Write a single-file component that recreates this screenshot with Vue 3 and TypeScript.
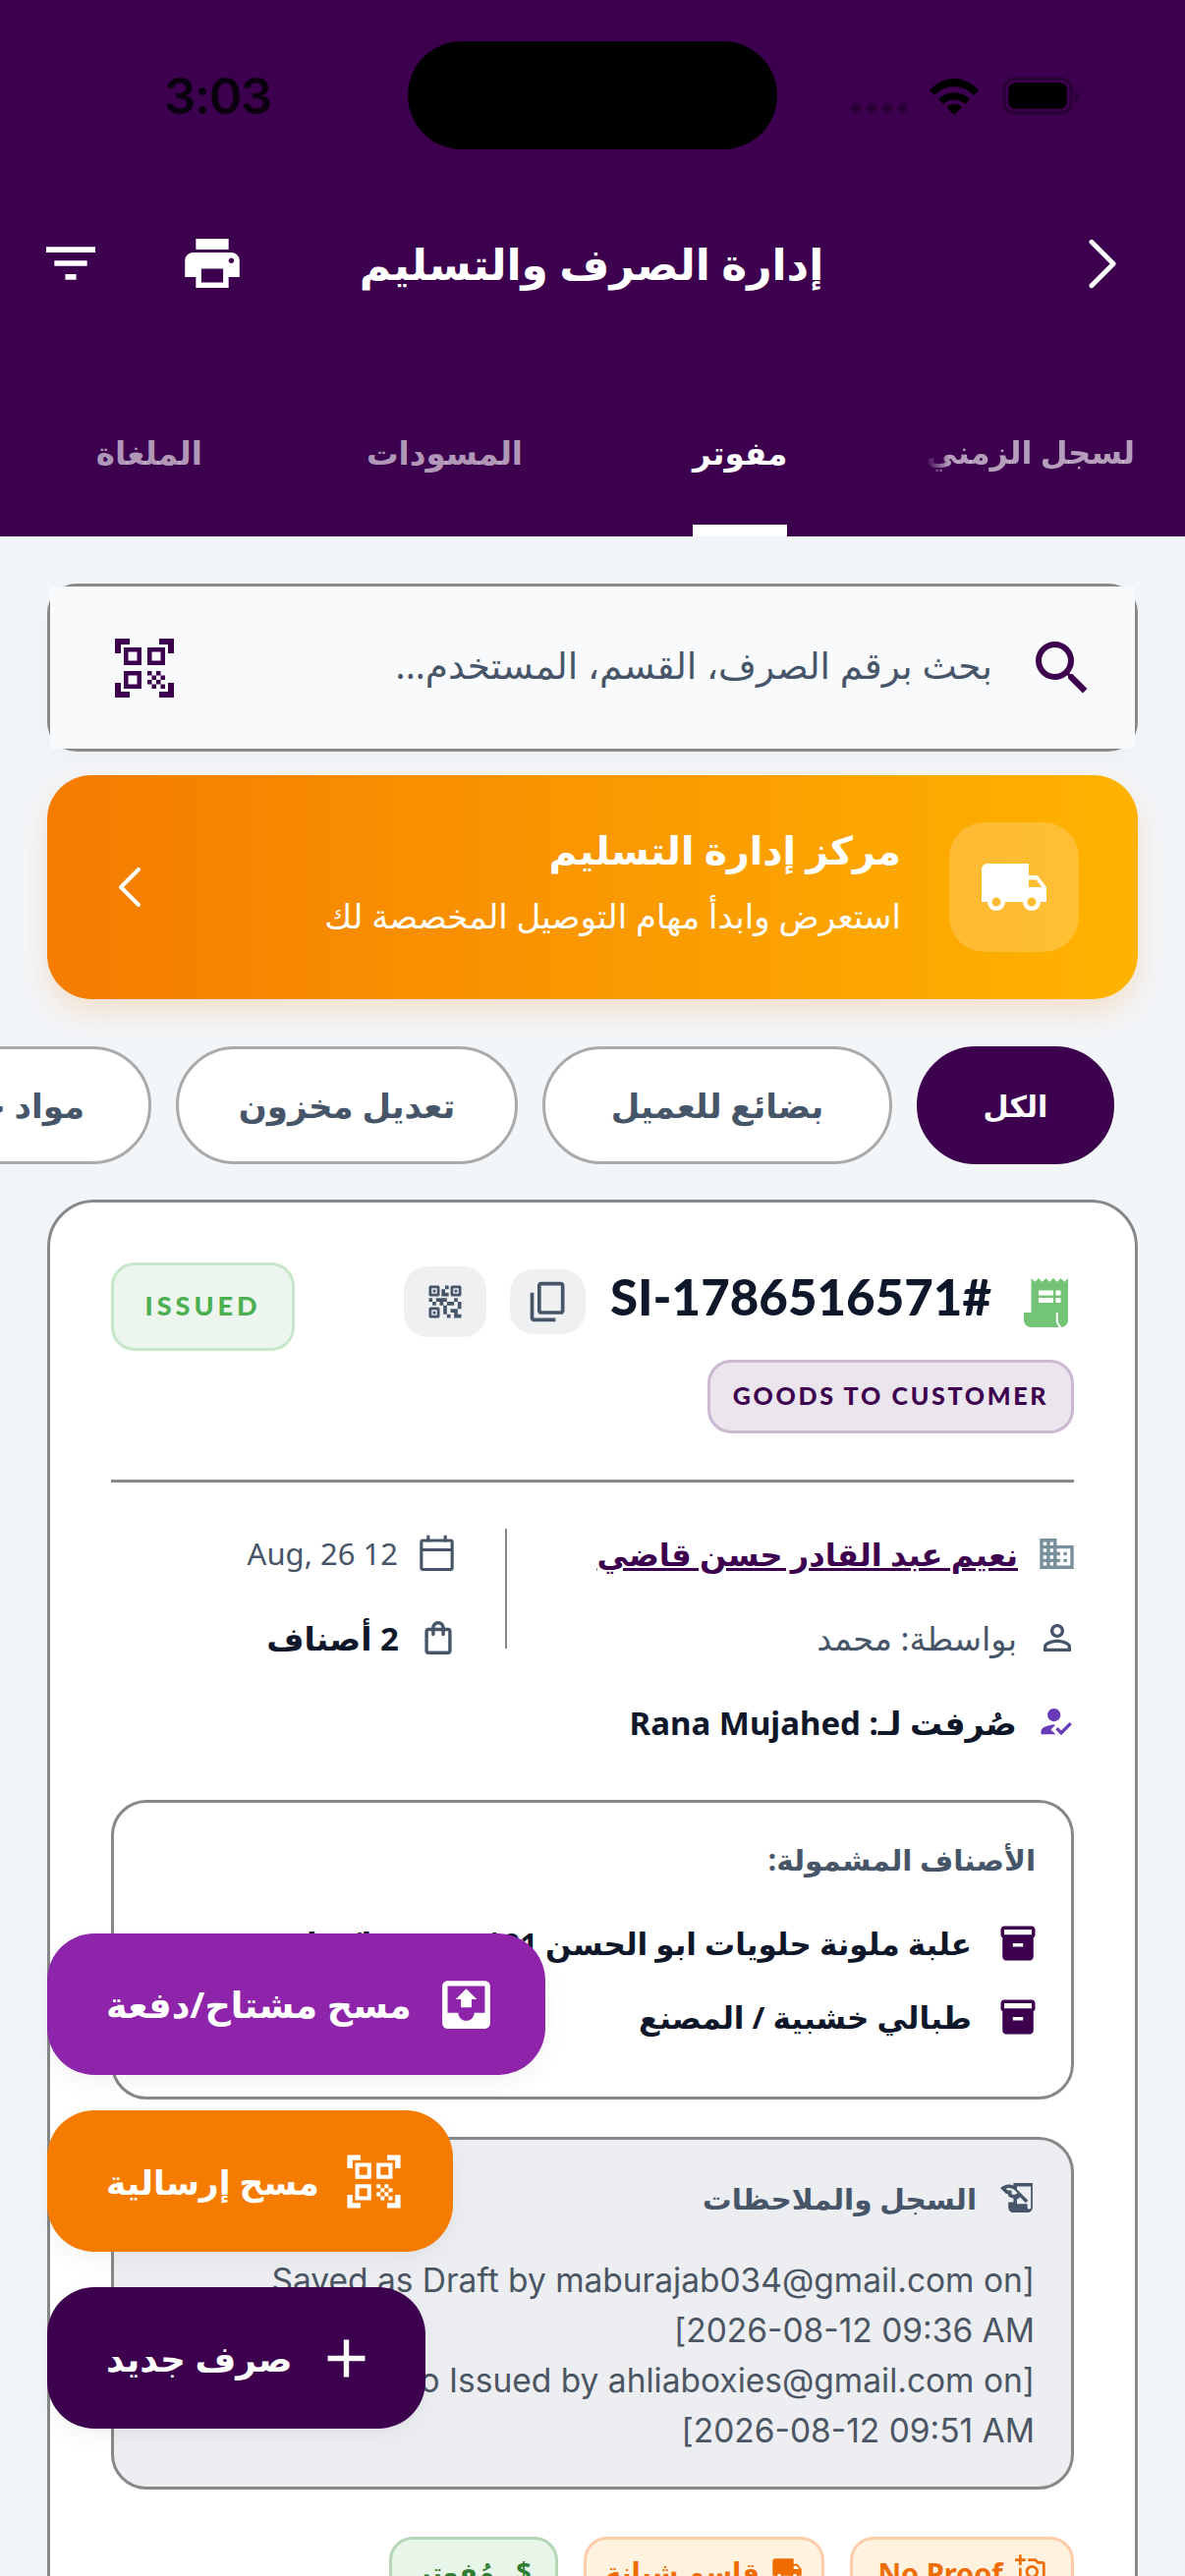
<script setup lang="ts">
const tabs = [
  { label: 'لسجل الزمني', cls: 'fade' },
  { label: 'مفوتر', cls: 'active' },
  { label: 'المسودات', cls: 'drafts' },
  { label: 'الملغاة', cls: 'void' },
]
const chips = [
  { label: 'الكل', cls: 'on' },
  { label: 'بضائع للعميل', cls: 'w2' },
  { label: 'تعديل مخزون', cls: 'w3' },
  { label: 'مواد خام', cls: '' },
]
const qrScan = 'M9.5 6.5v3h-3v-3h3M11 5H5v6h6V5zm-1.5 9.5v3h-3v-3h3M11 13H5v6h6v-6zm6.5-6.5v3h-3v-3h3M19 5h-6v6h6V5zm-6 8h1.5v1.5H13V13zm1.5 1.5H16V16h-1.5v-1.5zM16 13h1.5v1.5H16V13zm-3 3h1.5v1.5H13V16zm1.5 1.5H16V19h-1.5v-1.5zM16 16h1.5v1.5H16V16zm1.5-1.5H19V16h-1.5v-1.5zm0 3H19V19h-1.5v-1.5zM22 7h-2V4h-3V2h5v5zm0 15v-5h-2v3h-3v2h5zM2 22h5v-2H4v-3H2v5zM2 2v5h2V4h3V2H2z'
const box = 'M20 2H4c-1 0-2 .9-2 2v3.01c0 .72.43 1.34 1 1.69V20c0 1.1 1.1 2 2 2h14c.9 0 2-.9 2-2V8.7c.57-.35 1-.97 1-1.69V4c0-1.1-1-2-2-2zm-5 12H9v-2h6v2zm5-7H4V4l16-.02V7z'
const truck = 'M20 8h-3V4H3c-1.1 0-2 .9-2 2v11h2c0 1.66 1.34 3 3 3s3-1.34 3-3h6c0 1.66 1.34 3 3 3s3-1.34 3-3h2v-5l-3-4zM6 18.5c-.83 0-1.5-.67-1.5-1.5s.67-1.5 1.5-1.5 1.5.67 1.5 1.5-.67 1.5-1.5 1.5zm13.5-9l1.96 2.5H17V9.5h2.5zm-1.5 9c-.83 0-1.5-.67-1.5-1.5s.67-1.5 1.5-1.5 1.5.67 1.5 1.5-.67 1.5-1.5 1.5z'
</script>

<template>
  <div class="page">
    <header class="head">
      <div class="status">
        <span class="time">3:03</span>
        <div class="island"></div>
        <div class="sys">
          <svg class="dots" viewBox="0 0 58 12"><circle cx="6" cy="6" r="5"/><circle cx="22" cy="6" r="5"/><circle cx="38" cy="6" r="5"/><circle cx="54" cy="6" r="5"/></svg>
          <svg class="wifi" viewBox="0 0 50 38"><path d="M0 13C14-3 36-3 50 13l-5 5C33 6 17 6 5 18zM9 22c9-9 23-9 32 0l-5 5c-6-6-16-6-22 0zM17 30c4-4 12-4 16 0l-8 8z"/></svg>
          <svg class="batt" viewBox="0 0 80 40"><rect x="2" y="2" width="70" height="36" rx="11" fill="none" stroke="#2a0036" stroke-width="3.5"/><rect x="6.500" y="6.500" width="61" height="27" rx="7"/><path d="M76 14c3 1 4 3 4 6s-1 5-4 6z" fill="#2a0036"/></svg>
        </div>
      </div>
      <div class="bar">
        <div class="bar-r"><svg class="back" viewBox="0 0 30 52"><path d="M3 3l23 23L3 49" fill="none" stroke="#fff" stroke-width="5" stroke-linecap="round" stroke-linejoin="round"/></svg></div>
        <h1 class="title">إدارة الصرف والتسليم</h1>
        <div class="bar-l">
          <svg class="print" viewBox="2 3 20 18"><path d="M19 8H5c-1.660 0-3 1.340-3 3v6h4v4h12v-4h4v-6c0-1.660-1.340-3-3-3zm-3 11H8v-5h8v5zm3-7c-.55 0-1-.45-1-1s.45-1 1-1 1 .45 1 1-.45 1-1 1zm-1-9H6v4h12V3z" fill="#fff"/></svg>
          <svg class="filter" viewBox="3 6 18 12"><path d="M10 18h4v-2h-4v2zM3 6v2h18V6H3zm3 7h12v-2H6v2z" fill="#fff"/></svg>
        </div>
      </div>
      <nav class="tabs">
        <div v-for="t in tabs" :key="t.label" class="tab" :class="t.cls"><span>{{ t.label }}</span></div>
      </nav>
    </header>

    <div class="search">
      <div class="search-in">
        <svg class="s-ic" viewBox="3 3 18 18"><path d="M15.500 14h-.79l-.28-.27A6.471 6.471 0 0 0 16 9.500 6.500 6.500 0 1 0 9.500 16c1.610 0 3.090-.59 4.230-1.570l.27.28v.79l5 4.990L20.490 19l-4.990-5zm-6 0C7.010 14 5 11.990 5 9.500S7.010 5 9.500 5 14 7.010 14 9.500 11.990 14 9.500 14z" fill="#3d004f"/></svg>
        <span class="ph">بحث برقم الصرف، القسم، المستخدم...</span>
        <svg class="s-qr" viewBox="0 0 24 24"><path :d="qrScan" fill="#3d004f"/></svg>
      </div>
    </div>

    <section class="banner">
      <div class="ban-ic"><svg viewBox="0 0 24 24"><path :d="truck" fill="#fff"/></svg></div>
      <div class="ban-tx">
        <div class="ban-t">مركز إدارة التسليم</div>
        <div class="ban-s">استعرض وابدأ مهام التوصيل المخصصة لك</div>
      </div>
      <svg class="ban-ch" viewBox="0 0 24 40"><path d="M21 2L3 20l18 18" fill="none" stroke="#fff" stroke-width="4" stroke-linecap="round" stroke-linejoin="round"/></svg>
    </section>

    <div class="chips">
      <div v-for="c in chips" :key="c.label" class="chip" :class="c.cls">{{ c.label }}</div>
    </div>

    <article class="card">
      <div class="c-top">
        <svg class="rcpt" viewBox="3 2 18 20">
          <path d="M19.500 3.500L18 2l-1.500 1.500L15 2l-1.500 1.500L12 2l-1.500 1.500L9 2 7.500 3.500 6 2v14H3v3c0 1.660 1.340 3 3 3h12c1.660 0 3-1.340 3-3V2z" fill="#73c476"/>
          <path d="M9 7h6v2H9zM16 7h2v2h-2zM9 10h6v2H9zM16 10h2v2h-2z" fill="#fff"/>
          <path d="M16.500 16v3c0 1.200.5 2.200 1.500 3" fill="none" stroke="#fff" stroke-width=".8"/>
        </svg>
        <span class="sid">#SI-1786516571</span>
        <span class="ibtn copy"><svg viewBox="0 0 24 24"><g transform="matrix(1 0 0 -1 0 24)"><path d="M16 1H4c-1.100 0-2 .9-2 2v14h2V3h12V1zm3 4H8c-1.100 0-2 .9-2 2v14c0 1.100.9 2 2 2h11c1.100 0 2-.9 2-2V7c0-1.100-.9-2-2-2zm0 16H8V7h11v14z" fill="#475569"/></g></svg></span>
        <span class="ibtn qr"><svg viewBox="0 0 24 24"><path d="M15 21h-2v-2h2v2zM13 14h-2v5h2v-5zM21 12h-2v4h2v-4zM19 10h-2v2h2v-2zM7 12H5v2h2v-2zM5 10H3v2h2v-2zM12 5h2V3h-2v2zM4.500 4.500v3h3v-3h-3zM8 9H4c-.55 0-1-.45-1-1V4c0-.55.45-1 1-1h4c.55 0 1 .45 1 1v4c0 .55-.45 1-1 1zM4.500 16.500v3h3v-3h-3zM8 21H4c-.55 0-1-.45-1-1v-4c0-.55.45-1 1-1h4c.55 0 1 .45 1 1v4c0 .55-.45 1-1 1zM16.500 4.500v3h3v-3h-3zM20 9h-4c-.55 0-1-.45-1-1V4c0-.55.45-1 1-1h4c.55 0 1 .45 1 1v4c0 .55-.45 1-1 1zM19 19v-3h-4v2h2v3h4v-2h-2zM17 12h-4v2h4v-2zM13 10H7v2h2v2h2v-2h2v-2zM14 9V7h-2V5h-2v4h4zM6.750 5.250h-1.500v1.500h1.500v-1.500zM6.750 17.250h-1.500v1.500h1.500v-1.500zM18.750 5.250h-1.500v1.500h1.500v-1.500z" fill="#475569" fill-rule="evenodd"/></svg></span>
        <span class="issued">ISSUED</span>
      </div>
      <div class="goods-row"><span class="goods">GOODS TO CUSTOMER</span></div>
      <div class="hr"></div>

      <div class="meta">
        <div class="m-r">
          <div class="m-line">
            <svg viewBox="2 3 20 18" class="i-biz"><path d="M12 7V3H2v18h20V7H12zM6 19H4v-2h2v2zm0-4H4v-2h2v2zm0-4H4V9h2v2zm0-4H4V5h2v2zm4 12H8v-2h2v2zm0-4H8v-2h2v2zm0-4H8V9h2v2zm0-4H8V5h2v2zm10 12h-8v-2h2v-2h-2v-2h2v-2h-2V9h8v10zm-2-8h-2v2h2v-2zm0 4h-2v2h2v-2z" fill="#78909c"/></svg>
            <a class="name">نعيم عبد القادر حسن قاضي</a>
          </div>
          <div class="m-line m2">
            <svg viewBox="4 4 16 16" class="i-usr"><path d="M12 5.900c1.160 0 2.100.94 2.100 2.100s-.94 2.100-2.100 2.100S9.900 9.160 9.900 8s.94-2.100 2.100-2.100m0 9c2.970 0 6.100 1.460 6.100 2.100v1.100H5.900V17c0-.64 3.130-2.100 6.100-2.100M12 4C9.790 4 8 5.790 8 8s1.790 4 4 4 4-1.790 4-4-1.790-4-4-4zm0 9c-2.670 0-8 1.340-8 4v3h16v-3c0-2.660-5.330-4-8-4z" fill="#475569"/></svg>
            <span class="by wide">بواسطة: محمد</span>
          </div>
        </div>
        <div class="m-l">
          <div class="m-line">
            <svg viewBox="2 0 20 23" class="i-cal"><path d="M4 4h16a1 1 0 0 1 1 1v15a1 1 0 0 1-1 1H4a1 1 0 0 1-1-1V5a1 1 0 0 1 1-1zM3 9.500h18M7 1v4M17 1v4" fill="none" stroke="#475569" stroke-width="1.800"/></svg>
            <span class="by">12 Aug, 26</span>
          </div>
          <div class="m-line m2">
            <svg viewBox="4 2 16 20" class="i-bag"><path d="M18 6h-2c0-2.210-1.790-4-4-4S8 3.790 8 6H6c-1.100 0-2 .9-2 2v12c0 1.100.9 2 2 2h12c1.100 0 2-.9 2-2V8c0-1.100-.9-2-2-2zm-6-2c1.100 0 2 .9 2 2h-4c0-1.100.9-2 2-2zm6 16H6V8h2v2c0 .55.45 1 1 1s1-.45 1-1V8h4v2c0 .55.45 1 1 1s1-.45 1-1V8h2v12z" fill="#475569"/></svg>
            <span class="cnt">2 أصناف</span>
          </div>
        </div>
      </div>
      <div class="m-line m3">
        <svg viewBox="3 4 20 17" class="i-reg"><path d="M9 17l3-2.940c-.39-.04-.68-.06-1-.06-2.670 0-8 1.340-8 4v2h9l-3-3zm2-5c2.210 0 4-1.790 4-4s-1.790-4-4-4-4 1.790-4 4 1.790 4 4 4M15.470 20.500L12 17l1.400-1.410 2.070 2.080 5.130-5.170 1.400 1.410z" fill="#673ab7"/></svg>
        <span class="cnt">صُرفت لـ: Rana Mujahed</span>
      </div>

      <div class="items">
        <div class="lbl">الأصناف المشمولة:</div>
        <div class="it"><svg viewBox="0 0 24 24"><path :d="box" fill="#3d004f"/></svg><span>علبة ملونة حلويات ابو الحسن 21*21 / سماكة لبن مقوى 1950</span></div>
        <div class="it"><svg viewBox="0 0 24 24"><path :d="box" fill="#3d004f"/></svg><span>طبالي خشبية / المصنع</span></div>
      </div>

      <div class="log">
        <div class="log-h">
          <svg viewBox="1 4 20 17"><path d="M9 4v1.380c-.83-.33-1.720-.5-2.610-.5-1.790 0-3.580.68-4.950 2.050l3.330 3.330h1.110v1.110c.86.86 1.980 1.310 3.110 1.360V15H6v3c0 1.660 1.340 3 3 3h8c1.660 0 3-1.340 3-3V4H9zm-1.110 6.410V8.260H5.610L4.570 7.220a5.070 5.070 0 0 1 1.820-.34c1.340 0 2.590.52 3.540 1.460l1.410 1.410-.2.2a2.700 2.700 0 0 1-1.920.8c-.47 0-.93-.12-1.330-.34zM19 18c0 .55-.45 1-1 1s-1-.45-1-1v-2h-6v-2.780c.57-.16 1.100-.46 1.540-.9l.2-.2L16 15.500l1.410-1.410L11 7.680V6h8v12z" fill="#475569"/></svg>
          <span>السجل والملاحظات</span>
        </div>
        <p>[Saved as Draft by maburajab034@gmail.com on <span class="nb">2026-08-12 09:36 AM]</span></p>
        <p>[Changed to Issued by ahliaboxies@gmail.com on <span class="nb">2026-08-12 09:51 AM]</span></p>
      </div>

      <div class="foot">
        <span class="tag or t1"><svg viewBox="0 0 24 24"><path d="M21 6h-3.170L16 4h-6v2h5.120l1.830 2H21v12H5v-9H3v9c0 1.100.9 2 2 2h16c1.100 0 2-.9 2-2V8c0-1.100-.9-2-2-2zM8 14c0 2.760 2.240 5 5 5s5-2.240 5-5-2.240-5-5-5-5 2.240-5 5zm5-3c1.650 0 3 1.350 3 3s-1.350 3-3 3-3-1.350-3-3 1.350-3 3-3zM5 9V6h3V4H5V1H3v3H0v2h3v3z" fill="#ef6c00"/></svg><span>No Proof</span></span>
        <span class="tag or t2"><svg viewBox="0 0 24 24"><path :d="truck" fill="#ef6c00"/></svg><span>قاسم شبانة</span></span>
        <span class="tag gr t3"><b>$</b><span>مُفوتر</span></span>
      </div>
    </article>

    <div class="fabs">
      <button class="fab f1"><svg viewBox="0 0 24 24"><path fill-rule="evenodd" d="M19 3H5c-1.100 0-2 .9-2 2v14c0 1.100.9 2 2 2h14c1.100 0 2-.9 2-2V5c0-1.100-.9-2-2-2zm0 12h-4c0 1.660-1.350 3-3 3s-3-1.340-3-3H5V5h14v10zM16 10h-2v3h-4v-3H8l4-4 4 4z" fill="#fff"/></svg><span>مسح مشتاح/دفعة</span></button>
      <button class="fab f2"><svg viewBox="0 0 24 24"><path :d="qrScan" fill="#fff"/></svg><span>مسح إرسالية</span></button>
      <button class="fab f3"><svg viewBox="0 0 24 24"><path d="M19 13h-6v6h-2v-6H5v-2h6V5h2v6h6v2z" fill="#fff"/></svg><span>صرف جديد</span></button>
    </div>
  </div>
</template>

<style>
html, body { margin: 0; background: #f3f6f9; }
</style>

<style scoped>
.page { position: relative; width: 1206px; height: 2622px; overflow: hidden; background: #f3f6f9; direction: rtl; font-family: "Noto Sans", "DejaVu Sans", sans-serif; color: #0f172a; }
.head { height: 546px; background: #3d004f; display: flex; flex-direction: column; }
.status { position: relative; direction: ltr; height: 194px; display: flex; justify-content: space-between; align-items: flex-start; padding: 0 108px 0 167px; box-sizing: border-box; }
.time { font: 600 51px/1 Inter, sans-serif; letter-spacing: -1.500px; color: #0b0010; margin-top: 72px; }
.island { position: absolute; left: 415px; top: 42px; width: 376px; height: 110px; border-radius: 55px; background: #000; }
.sys { display: flex; align-items: flex-end; margin-top: 78px; height: 39px; }
.dots { width: 58px; height: 12px; fill: #2a0036; margin-right: 23px; margin-bottom: 1px; }
.wifi { width: 50px; height: 38px; fill: #000; margin-right: 24px; }
.batt { width: 78px; height: 39px; fill: #000; }
.bar { height: 148px; display: grid; grid-template-columns: 1fr auto 1fr; align-items: center; padding: 0 69px 0 47px; }
.bar-r { display: flex; }
.bar-l { display: flex; align-items: center; justify-content: flex-end; }
.back { width: 29px; height: 51px; }
.title { margin: 0; text-align: center; color: #fff; font-size: 44px; font-weight: 700; transform: translateX(10px); }
.print { width: 56px; height: 50px; margin-left: 91px; }
.filter { width: 50px; height: 34px; }
.tabs { flex: 1; display: flex; align-items: stretch; padding-right: 51px; overflow: hidden; }
.tab { position: relative; color: rgba(255,255,255,.62); font-size: 32.500px; font-weight: 700; padding-top: 96px; white-space: nowrap; }
.tab.active { color: #fff; margin-right: 141px; }
.tab.drafts { margin-right: 173px; }
.tab.void { margin-right: 167px; }
.tab.active::after { content: ""; position: absolute; left: 0; right: 0; bottom: 0; height: 12px; background: #fff; }
.tab.fade { font-size: 32px; }
.tab.fade span { display: block; -webkit-mask-image: linear-gradient(to right, transparent, #000 24px); mask-image: linear-gradient(to right, transparent, #000 24px); }

.search { margin: 48px 48px 0; height: 171px; box-sizing: border-box; border: 3px solid #888; border-radius: 30px; box-shadow: 0 6px 20px rgba(0,0,0,.03); }
.search-in { height: 165px; background: #f9fafc; display: flex; align-items: center; padding: 0 47px 0 63px; }
.s-ic { width: 54px; height: 54px; }
.ph { flex: 1; margin: 0 44px 6px 0; font-size: 37.500px; color: #475569; white-space: nowrap; }
.s-qr { width: 72px; height: 72px; margin-left: -3px; }

.banner { margin: 24px 48px 0; height: 228px; border-radius: 45px; background: linear-gradient(to left, #ffb300, #f57c00); box-shadow: 0 14px 30px rgba(245,124,0,.18); display: flex; align-items: center; padding: 0 60px 0 72px; color: #fff; }
.ban-ic { width: 132px; height: 132px; border-radius: 36px; background: rgba(255,255,255,.2); display: flex; align-items: center; justify-content: center; }
.ban-ic svg { width: 72px; height: 72px; }
.ban-tx { flex: 1; margin-right: 49px; padding-bottom: 13px; }
.ban-t { font-size: 39.500px; font-weight: 700; }
.ban-s { font-size: 34px; margin-top: 17px; }
.ban-ch { width: 24px; height: 40px; }

.chips { margin-top: 48px; height: 120px; display: flex; gap: 25px; padding-right: 72px; overflow: hidden; }
.chip { flex: none; height: 120px; box-sizing: border-box; display: flex; align-items: center; justify-content: center; padding: 0 65px; border-radius: 60px; border: 3px solid #aaa; background: #fff; color: #475569; font-size: 34px; font-weight: 700; white-space: nowrap; }
.chip.on { background: #3d004f; border-color: #3d004f; color: #fff; font-size: 30px; width: 201px; padding: 0; }
.chip.w2 { width: 356px; padding: 0; }
.chip.w3 { width: 348px; padding: 0; }

.card { margin: 36px 48px 0; border: 3px solid #888; border-radius: 48px; background: #fff; padding: 60px 62px; }
.c-top { display: flex; align-items: flex-start; height: 90px; }
.rcpt { width: 45px; height: 50px; margin: 17px 6px 0 0; }
.sid { margin-right: 33px; font: 900 51px/1.2 Lato, "Noto Sans", sans-serif; margin-top: 5px; white-space: nowrap; }
.ibtn { flex: none; display: flex; align-items: center; justify-content: center; background: #eef0f2; border-radius: 24px; }
.ibtn svg { width: 44px; height: 44px; }
.copy { width: 77px; height: 66px; margin: 8px 25px 0 0; }
.qr { width: 84px; height: 72px; margin: 5px 24px 0 0; }
.issued { margin: 1px auto 0 0; width: 187px; height: 90px; box-sizing: border-box; border: 3px solid #c8e6c9; border-radius: 24px; background: #edf6ee; color: #4caf50; display: flex; align-items: center; justify-content: center; font: 900 27px/1 Lato, sans-serif; letter-spacing: 4px; padding-bottom: 3px; }
.goods-row { display: flex; margin-top: 10px; }
.goods { width: 373px; height: 75px; box-sizing: border-box; border: 3px solid #cbb8d1; border-radius: 24px; background: #ebe5ed; color: #3d004f; display: flex; align-items: center; justify-content: center; font: 900 25px/1 Lato, sans-serif; letter-spacing: 2.700px; white-space: nowrap; padding-bottom: 3px; }
.hr { height: 3px; background: #888; margin-top: 47px; }
.meta { display: flex; margin-top: 47px; }
.m-r { width: 579px; border-left: 2px solid #888; box-sizing: border-box; height: 122px; }
.m-l { padding-right: 52px; }
.m-line { display: flex; align-items: center; height: 50px; }
.m2 { margin-top: 36px; }
.i-biz { width: 35px; height: 31px; margin-left: 22px; }
.i-usr { width: 30px; height: 28px; margin-left: 26px; margin-right: 2px; }
.i-cal { width: 35px; height: 40px; margin-left: 22px; }
.i-bag { width: 28px; height: 34px; margin-left: 26px; margin-right: 2px; }
.i-reg { width: 34px; height: 28px; margin-left: 24px; }
.name { color: #3d004f; font-size: 32px; font-weight: 700; text-decoration: underline; white-space: nowrap; }
.by { font-size: 31px; color: #475569; }
.by.wide { font-size: 33.500px; }
.cnt { font-size: 33px; font-weight: 700; color: #0f172a; }
.m3 { margin-top: 36px; }
.items { margin-top: 54px; height: 305px; box-sizing: border-box; border: 3px solid #888; border-radius: 36px; padding: 37px 36px 0 37px; }
.lbl { font-size: 29.500px; font-weight: 700; color: #475569; }
.it { display: flex; align-items: center; margin-top: 42px; white-space: nowrap; font-size: 31px; font-weight: 700; color: #0f172a; height: 46px; }
.it + .it { margin-top: 29px; }
.it svg { width: 42px; height: 42px; margin-left: 26px; flex: none; margin-right: -3px; }
.log { margin-top: 38px; height: 359px; box-sizing: border-box; border: 3px solid #888; border-radius: 36px; background: #eceef1; padding: 34px 37px 0 38px; }
.log-h { display: flex; align-items: center; font-size: 29.500px; font-weight: 700; color: #475569; height: 50px; }
.log-h svg { width: 36px; height: 30px; margin-left: 23px; }
.log p { margin: 0; font: 400 33.500px/51px Inter, sans-serif; color: #4b5563; }
.log .nb { white-space: nowrap; }
.log-h + p { margin-top: 34px; }
.foot { display: flex; gap: 26px; margin-top: 48px; }
.tag { height: 80px; box-sizing: border-box; border: 3px solid; border-radius: 24px; display: flex; align-items: flex-start; padding: 14px 0 0; justify-content: center; font-size: 27px; font-weight: 700; gap: 12px; }
.tag svg { width: 32px; height: 32px; }
.t1 { width: 228px; font-size: 29px; }
.t2 { width: 245px; }
.t3 { width: 172px; gap: 22px; }
.or { background: #fff3e0; border-color: #ffccaa; color: #ef6c00; }
.gr { background: #e8f5e9; border-color: #b5d6b7; color: #2e7d32; }
.gr b { font-weight: 700; }

.fabs { position: absolute; left: 48px; top: 1968px; display: flex; flex-direction: column; align-items: flex-end; gap: 36px; }
.fab { height: 144px; border: 0; border-radius: 48px; display: flex; align-items: center; gap: 23px; padding: 0 48px 0 60px; color: #fff; font-family: inherit; font-size: 36px; font-weight: 700; box-shadow: 0 8px 24px rgba(0,0,0,.05); white-space: nowrap; direction: rtl; }
.fab svg { width: 65px; height: 65px; }
.f1 { background: #8e24aa; font-size: 36.500px; }
.f2 { background: #f57c00; font-size: 34.500px; }
.f3 { background: #3d004f; }
</style>
